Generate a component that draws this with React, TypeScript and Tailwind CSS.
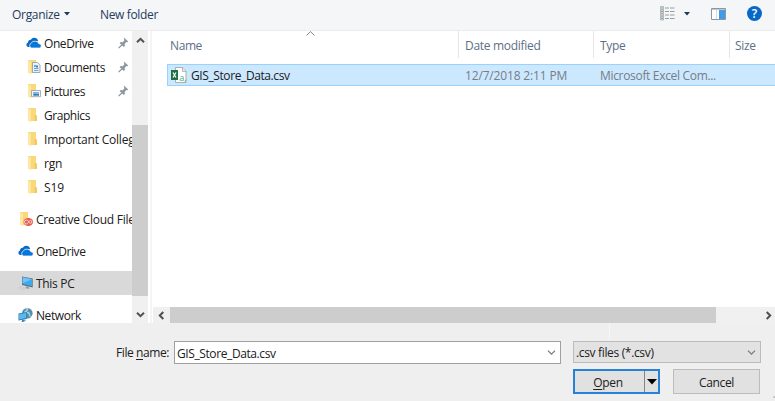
import React from 'react';

type IconKind = 'cloud' | 'documents' | 'pictures' | 'folder' | 'creative' | 'pc' | 'network';

function FolderShape() {
  return (
    <>
      <path d="M2 1h8v7.5h1V14H2z" fill="#f8d87b" />
      <path d="M8.5 8.5H11V14H8.5z" fill="#f2ca62" />
      <path d="M2 1 5 2.8V15.3l-3-1.6z" fill="#ffe7a0" />
    </>
  );
}

function Icon({ kind }: { kind: IconKind }) {
  return (
    <svg width="16" height="16" viewBox="0 0 16 16" className="shrink-0">
      {kind === 'cloud' && (
        <>
          <path d="M4.2 12H2.5A2.3 2.3 0 0 1 2 7.5a2.9 2.9 0 0 1 2.8-2.7A4 4 0 0 1 12.2 6L7 8z" fill="#0869c9" />
          <path d="M5.6 13a2.5 2.5 0 0 1-.3-4.8 3.2 3.2 0 0 1 3.7-2 3.7 3.7 0 0 1 3.9 2.6 2.1 2.1 0 0 1 .5 4.2z" fill="#0878d8" stroke="#fff" strokeWidth=".7" />
        </>
      )}
      {(kind === 'documents' || kind === 'pictures' || kind === 'folder' || kind === 'creative') && <FolderShape />}
      {kind === 'documents' && (
        <>
          <path d="M6.5 3.5h5L14 5.8v7.7H6.5z" fill="#e8f1f8" stroke="#8b9ba8" strokeWidth=".8" />
          <path d="M8 6h2v2H8zM8 9h4.5v1H8zM8 11h4.5v1H8z" fill="#6ca8d7" />
          <path d="M10 6.5h2v2h-2z" fill="#4a84b5" />
        </>
      )}
      {kind === 'pictures' && (
        <>
          <path d="M5.5 7.5h9v6.2h-9z" fill="#f3f7fa" stroke="#91a0aa" strokeWidth=".8" />
          <path d="M7 9h6v3.5H7z" fill="#83b9e6" />
          <path d="m7 12.5 2-2 1.5 1 2.5-.5v1.5z" fill="#34699c" />
        </>
      )}
      {kind === 'creative' && (
        <>
          <ellipse cx="10.3" cy="11" rx="4.8" ry="4" fill="#e95a50" />
          <path d="M9.8 12.5 8.6 13a2 2 0 0 1-.2-4c2-.2 2.6 3.7 4.1 3.3a1.4 1.4 0 0 0-.2-2.8c-1.2 0-1.6 1.7-2.4 2.3" fill="none" stroke="#ffe5df" strokeWidth=".9" />
        </>
      )}
      {kind === 'pc' && (
        <>
          <path d="m4 1.5 10.7 2v9L4 10z" fill="#58717f" />
          <path d="m4.6 2.3 9.4 2v7l-9.4-2.2z" fill="#3fa9ec" />
          <path d="m4.6 2.3 9.4 2-9.4 4z" fill="#70c2f8" />
          <path d="m8.5 11 2 .4v1.1l1.5.7-2 .6-3-1 1.5-.5z" fill="#8599a5" />
          <path d="m3 11.3 5 2.2-3 1.5-5-2z" fill="#b5bec3" />
          <path d="m1.3 12.7 4.3 1.5M2.6 12l4.2 1.5" stroke="#edf0f1" strokeWidth=".6" />
        </>
      )}
      {kind === 'network' && (
        <>
          <circle cx="9.3" cy="6.3" r="5.3" fill="#568da8" />
          <path d="M7.5 1.5c3-.5 2 2 .5 2.7C5.5 5.4 7.5 6.8 9.5 5.6c2.5-1 1.2 3.2 3 4" fill="none" stroke="#a5d2e3" strokeWidth="1.5" />
          <path d="m.5 6.5 8.3-1.6v7L.5 13.5z" fill="#277fb7" />
          <path d="m1.1 7.2 7-1.3v5.2l-7 1.5z" fill="#5bb8ee" />
          <path d="m4 13 2.5-.5v1l2 .2-4 1.3-1.5-.6 1-.4z" fill="#437f9b" />
        </>
      )}
    </svg>
  );
}

function Pin() {
  return (
    <svg width="11" height="12" viewBox="0 0 11 12" className="mr-[3px] ml-auto shrink-0">
      <path d="m6.2.8 4 3.7-1 .8-.8-.2-1.8 2 .2 2-1 1L1.6 6l1-.9 2.2.2L6.6 3l-.9-1z" fill="#8b969f" />
      <path d="M3.8 8 .6 11.2" stroke="#8b969f" strokeWidth="1.2" />
    </svg>
  );
}

function Chevron({ d, light }: { d: 'up' | 'down' | 'left' | 'right'; light?: boolean }) {
  const paths = { up: 'M1 6.3 4.5 2.8 8 6.3', down: 'M1 2.7 4.5 6.2 8 2.7', left: 'M6.3 1 2.8 4.5 6.3 8', right: 'M2.7 1 6.2 4.5 2.7 8' };
  return (
    <svg width="9" height="9" viewBox="0 0 9 9" className="shrink-0">
      <path d={paths[d]} fill="none" stroke={light ? '#777' : '#505050'} strokeWidth={light ? 1.2 : 2} />
    </svg>
  );
}

function NavRow({ icon, label, pinned, nested, selected, track }: { icon: IconKind; label: string; pinned?: boolean; nested?: boolean; selected?: boolean; track: string }) {
  return (
    <div className={`flex h-6 w-[132px] shrink-0 items-center overflow-hidden ${nested ? 'pl-[26px]' : 'pl-[18px]'} ${selected ? 'bg-[#d9d9d9]' : ''}`}>
      <Icon kind={icon} />
      <span className={`ml-[2px] pt-[2px] ${pinned ? '' : 'shrink-0'} ${track}`}>{label}</span>
      {pinned && <Pin />}
    </div>
  );
}

export default function App() {
  return (
    <div className="flex h-[401px] w-[775px] flex-col overflow-hidden bg-[#efefef] font-['Open_Sans','Noto_Sans',sans-serif] text-[12px] leading-4 whitespace-nowrap text-[#202020]">
      <header className="flex h-[31px] shrink-0 items-center border-b border-[#ececec] bg-[#f4f6f8] pl-3 text-[#273b5c]">
        <span className="w-[48px] tracking-[-0.3px]">Organize</span>
        <svg width="6" height="4" viewBox="0 0 6 4" className="mt-[-2px] ml-1"><path d="M0 0h6L3 3.6z" fill="#1e395b" /></svg>
        <span className="ml-[30px] w-[60px] tracking-[-0.35px]">New folder</span>
        <svg width="16" height="15" viewBox="0 0 16 15" className="mt-[-4px] ml-[500px]">
          <path d="M.5.5h3v3h-3zM.5 4h3v3h-3zM.5 7.5h3v3h-3zM.5 11h3v3h-3z" fill="#e3e9e5" stroke="#9ba4a3" strokeWidth=".7" />
          <path d="M1.3 1.5h1.5v1H1.3z" fill="#6cae77" /><path d="M1.3 5h1.5v1H1.3zM1.3 12h1.5v1H1.3z" fill="#6094c4" /><path d="M1.3 8.5h1.5v1H1.3z" fill="#e65645" />
          <path d="M5 2h4M10 2h4.5M5 5.5h4M10 5.5h4.5M5 9h4M10 9h4.5M5 12.5h4M10 12.5h4.5" stroke="#9a9da0" />
        </svg>
        <svg width="6" height="4" viewBox="0 0 6 4" className="mt-[-2px] ml-2"><path d="M0 0h6L3 3.4z" fill="#1e395b" /></svg>
        <svg width="15" height="12" viewBox="0 0 15 12" className="mt-[-3px] ml-[21px]">
          <path d="M.5.5h14v11H.5z" fill="#fff" stroke="#8e979e" /><path d="M1 1h13v1H1z" fill="#c1c9ce" /><path d="M8 2h6v9H8z" fill="#3e9ce9" /><path d="M5.5 2v9" stroke="#d4dadd" />
        </svg>
        <div className="mt-[-3px] ml-[21px] flex size-[15px] items-center justify-center rounded-full bg-[#0868c7] text-[12px] font-semibold text-white">?</div>
      </header>

      <div className="flex h-[292px] shrink-0 bg-white">
        <aside className="flex w-[132px] shrink-0 flex-col overflow-hidden">
          <NavRow icon="cloud" label="OneDrive" pinned nested track="tracking-[-0.42px]" />
          <NavRow icon="documents" label="Documents" pinned nested track="tracking-[-0.35px]" />
          <NavRow icon="pictures" label="Pictures" pinned nested track="tracking-[-0.5px]" />
          <NavRow icon="folder" label="Graphics" nested track="tracking-[-0.45px]" />
          <NavRow icon="folder" label="Important College" nested track="tracking-[-0.2px]" />
          <NavRow icon="folder" label="rgn" nested track="tracking-[-0.2px]" />
          <NavRow icon="folder" label="S19" nested track="tracking-[-0.1px]" />
          <div className="mt-2 flex flex-col gap-2">
            <NavRow icon="creative" label="Creative Cloud Files" track="tracking-[-0.26px]" />
            <NavRow icon="cloud" label="OneDrive" track="tracking-[-0.42px]" />
            <NavRow icon="pc" label="This PC" selected track="tracking-[-0.3px]" />
            <NavRow icon="network" label="Network" track="tracking-[-0.42px]" />
          </div>
        </aside>
        <div className="flex w-4 shrink-0 flex-col items-center bg-[#f0f0f0] pt-[5px]">
          <Chevron d="up" />
          <div className="mt-[80px] h-[171px] w-4 bg-[#cdcdcd]" />
          <div className="mt-[14px] flex"><Chevron d="down" /></div>
        </div>
        <div className="ml-[2px] w-[2px] shrink-0 bg-[#f5f5f5]" />

        <main className="flex min-w-0 flex-1 flex-col">
          <div className="flex h-[27px] shrink-0 text-[#5d6f87]">
            <div className="flex w-[307px] border-r border-[#e7e7e7] pl-[18px]">
              <span className="w-[136px] pt-[7px] tracking-[-0.4px]">Name</span>
              <svg width="9" height="5" viewBox="0 0 9 5"><path d="m.5 4.5 4-4 4 4" fill="none" stroke="#858585" /></svg>
            </div>
            <div className="w-[135px] border-r border-[#e7e7e7] pt-[7px] pl-[6px] tracking-[-0.3px]">Date modified</div>
            <div className="w-[136px] border-r border-[#e7e7e7] pt-[7px] pl-[6px] tracking-[-0.3px]">Type</div>
            <div className="pt-[7px] pl-[5px] tracking-[-0.3px]">Size</div>
          </div>
          <div className="mt-[6px] ml-[15px] flex h-[22px] shrink-0 items-center border border-r-0 border-[#99d1ff] bg-[#cce8ff] text-[#757d86]">
            <svg width="16" height="16" viewBox="0 0 16 16" className="ml-[3px] shrink-0">
              <path d="M4.5.5h7l3.5 3.6v11.4H4.5z" fill="#fff" stroke="#9b9f9b" strokeWidth=".8" /><path d="M11.5.5v4H15" fill="#eee" stroke="#9b9f9b" strokeWidth=".7" />
              <path d="M0 3h7v10H0z" fill="#1e7145" /><path d="m2 5.5 3 5m0-5-3 5" stroke="#fff" strokeWidth="1.2" />
              <text x="8.2" y="13.5" fontSize="9" fill="#49a875">a,</text>
            </svg>
            <span className="ml-1 w-[274px] pt-[2px] tracking-[-0.4px] text-[#202020]">GIS_Store_Data.csv</span>
            <span className="w-[135px] pt-[2px] tracking-[-0.16px]">12/7/2018 2:11 PM</span>
            <span className="pt-[2px] tracking-[-0.32px]">Microsoft Excel Com...</span>
          </div>
          <div className="mt-auto ml-px flex h-4 items-center bg-[#f0f0f0] pl-1">
            <Chevron d="left" />
            <div className="ml-1 h-4 w-[546px] bg-[#cdcdcd]" />
            <div className="ml-auto flex pr-[2px]"><Chevron d="right" /></div>
          </div>
        </main>
      </div>

      <footer className="flex flex-1 flex-col">
        <div className="ml-[609px] h-[17px] w-px bg-[#f7f7f7]" />
        <div className="mt-px flex">
          <label className="w-[174px] pt-[4px] pr-[5px] text-right tracking-[-0.42px]">File <u className="underline-offset-2">n</u>ame:</label>
          <div className="flex h-[23px] w-[387px] items-center justify-between border border-[#a0a0a0] bg-white pr-1 pl-[2px]">
            <span className="pt-[2px] tracking-[-0.4px]">GIS_Store_Data.csv</span><Chevron d="down" light />
          </div>
          <div className="ml-3 flex h-[22px] w-[188px] items-center justify-between border border-[#bcbcbc] bg-[#e2e2e2] pr-[4px] pl-[2px]">
            <span className="pt-[2px] tracking-[-0.34px]">.csv files (*.csv)</span><Chevron d="down" light />
          </div>
        </div>
        <div className="mt-[5px] ml-[573px] flex">
          <button className="flex h-[25px] w-[87px] items-center border-2 border-[#2582d8] bg-[#e1e1e1]">
            <span className="w-[69px] pt-[2px] pr-[3px] text-center tracking-[-0.3px]"><u className="underline-offset-2">O</u>pen</span>
            <span className="flex h-[21px] flex-1 items-center justify-center border-l border-[#858585]">
              <svg width="10" height="6" viewBox="0 0 10 6"><path d="M0 0h10L5 5.5z" fill="#000" /></svg>
            </span>
          </button>
          <button className="ml-[13px] h-[25px] w-[87px] border border-[#bcbcbc] bg-[#e1e1e1] pt-[2px] text-center tracking-[-0.35px]">Cancel</button>
        </div>
        <div className="mt-[2px] ml-auto size-[2px] bg-[#cacaca]" />
      </footer>
    </div>
  );
}
